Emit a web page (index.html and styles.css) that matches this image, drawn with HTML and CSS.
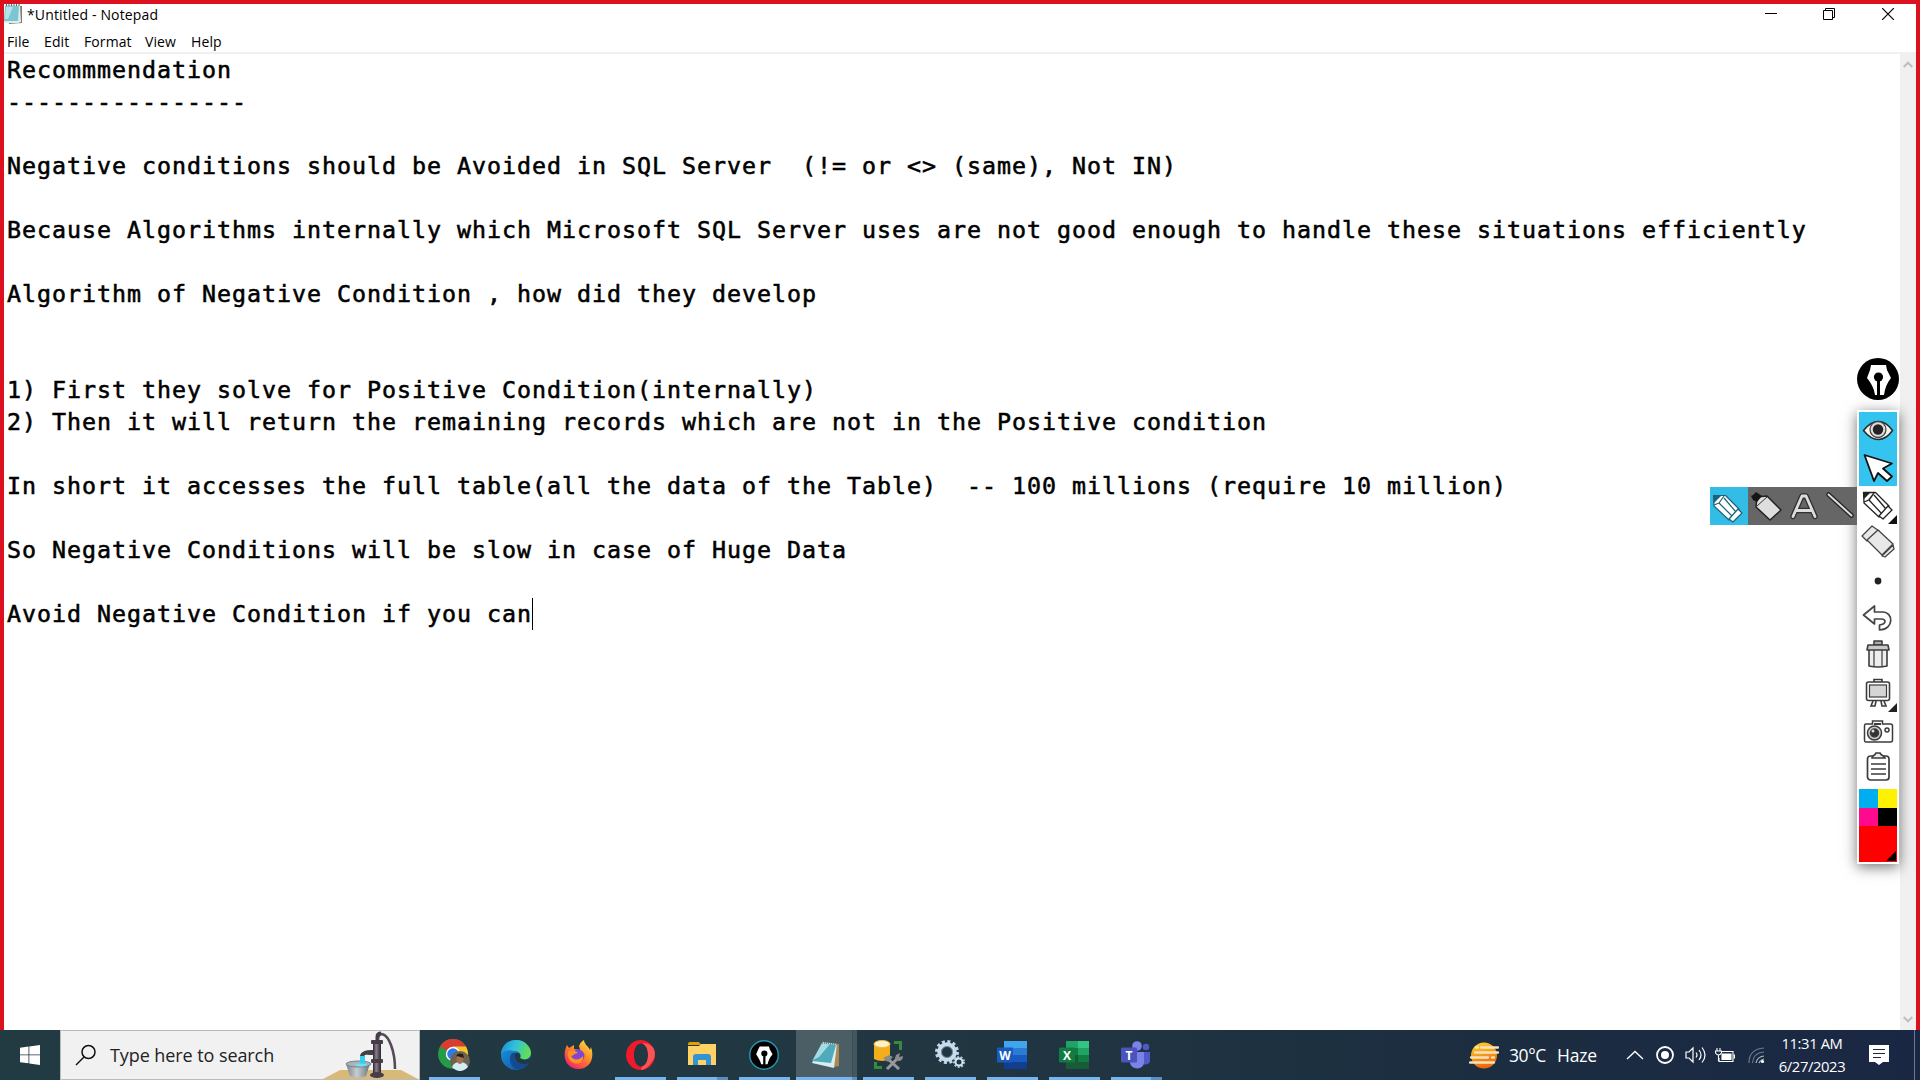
FILE: index.html
```html
<!DOCTYPE html>
<html lang="en">
<head>
<meta charset="utf-8">
<title>*Untitled - Notepad</title>
<link rel="stylesheet" href="styles.css">
</head>
<body>
<main class="window">
  <header class="titlebar">
    <svg class="app-icon" width="19" height="20" viewBox="0 0 19 20"><path d="M3 2h15v17l-13 1z" fill="#8b7960"/><path d="M1 1h15l1 17-3 1H0z" fill="#d9eef0"/><path d="M1 2h14l-1 15H0z" fill="#7cc5d2"/><path d="M2 3h7L4 15H1z" fill="#b6e3e8"/><path d="M2 1h14" stroke="#59656a" stroke-width="2" stroke-dasharray="1 1.5"/></svg>
    <span class="title">*Untitled - Notepad</span>
    <div class="controls">
      <svg width="12" height="12" viewBox="0 0 12 12"><path d="M0 5.500h12" stroke="#000"/></svg>
      <svg width="12" height="12" viewBox="0 0 12 12" fill="none" stroke="#000"><path d="M.5 2.500h9v9h-9zM2.500 2.500V.5h9v9h-2"/></svg>
      <svg width="12" height="12" viewBox="0 0 12 12"><path d="M0 0l12 12M12 0L0 12" stroke="#000" stroke-width="1.200"/></svg>
    </div>
  </header>
  <nav class="menu"><span class="m-file">File</span><span class="m-edit">Edit</span><span class="m-format">Format</span><span class="m-view">View</span><span class="m-help">Help</span></nav>
  <section class="editor">
<pre class="text">Recommmendation
----------------

Negative conditions should be Avoided in SQL Server  (!= or &lt;&gt; (same), Not IN)

Because Algorithms internally which Microsoft SQL Server uses are not good enough to handle these situations efficiently

Algorithm of Negative Condition , how did they develop


1) First they solve for Positive Condition(internally)
2) Then it will return the remaining records which are not in the Positive condition

In short it accesses the full table(all the data of the Table)  -- 100 millions (require 10 million)

So Negative Conditions will be slow in case of Huge Data

Avoid Negative Condition if you can<span class="caret"></span></pre>
    <div class="scrollbar">
      <svg width="10" height="7" viewBox="0 0 10 7"><path d="M.7 6L5 1.700 9.300 6" fill="none" stroke="#bfbfbf" stroke-width="2"/></svg>
      <svg width="10" height="7" viewBox="0 0 10 7"><path d="M.7 1L5 5.300 9.300 1" fill="none" stroke="#bfbfbf" stroke-width="2"/></svg>
    </div>
  </section>
</main>

<svg class="pen-hub" width="42" height="42" viewBox="0 0 42 42"><circle cx="21" cy="21" r="21"/><path d="M14 7h15l1 5 4 8c-4 5-6 10-7 17h-4V23h-3v14h-2c-1-7-4-12-8-17l3-8z" fill="#fff"/><circle cx="21.500" cy="19" r="4.600"/><path d="M21.500 20v17" stroke="#000" stroke-width="1.600"/></svg>

<aside class="flyout">
  <svg class="picked" width="38" height="38" viewBox="0 0 38 38"><g stroke="#1b6378" stroke-width="1.200" stroke-linejoin="round"><path d="M3.500 8.500h12L29 22 19 33 4 19z" fill="#fff"/><path d="M4 18l5-2 5-7M9 16l14 14M14 11l12 14" fill="none"/><path d="M19 32l9-10 4 4-9 9z" fill="#fff"/></g><path d="M3 8h9l-8 8z" fill="#1b6378"/></svg>
  <svg width="37" height="38" viewBox="0 0 37 38"><path d="M9 10l10-1 14 14-11 10L8 20z" fill="#dedede" stroke="#222" stroke-width="1.500" stroke-linejoin="round"/><path d="M9 19l10-9" stroke="#333" fill="none"/><path d="M3 9l2-1 3-3 6 4-5 6-4-2z" fill="#151515"/></svg>
  <svg width="36" height="38" viewBox="0 0 36 38"><path d="M8 29.500L17 9h4l9 20.500M12.500 23.500h13" fill="none" stroke="#303030" stroke-width="5.500" stroke-linejoin="round" stroke-linecap="round"/><path d="M8 29.500L17 9h4l9 20.500M12.500 23.500h13" fill="none" stroke="#ddd" stroke-width="2.800" stroke-linejoin="round" stroke-linecap="round"/></svg>
  <svg width="36" height="38" viewBox="0 0 36 38"><path d="M7.500 7.500l23 21" stroke="#222" stroke-width="4.500" stroke-linecap="round"/><path d="M7.500 7.500l23 21" stroke="#ddd" stroke-width="2" stroke-linecap="round"/></svg>
</aside>

<aside class="tools">
  <svg class="on" width="38" height="37" viewBox="0 0 38 37"><path d="M4.500 18.500C14 6.500 25 6.500 33.500 18.500 25 30.500 14 30.500 4.500 18.500z" fill="#faf7ef" stroke="#2c2c2c" stroke-width="1.600"/><circle cx="19" cy="17.500" r="8" fill="#ddd" stroke="#444" stroke-width="1.300"/><circle cx="19" cy="17.500" r="5.200" fill="#222"/></svg>
  <svg class="on" width="38" height="37" viewBox="0 0 38 37"><path d="M5.500 6L33 14.500l-9 5 9 8-5 4.500-9-8-4 8z" fill="#fff" stroke="#111" stroke-width="1.800" stroke-linejoin="round"/></svg>
  <svg width="38" height="38" viewBox="0 0 38 38"><g stroke="#222" stroke-width="1.300" stroke-linejoin="round"><path d="M4.500 6.500h12L30 20l-10 11L5 17z" fill="#fff"/><path d="M5 16l5-2 5-7M10 14l13 14M15 9l12 14" fill="#ddd"/><path d="M20 30l9-10 4 4-9 9z" fill="#fff"/></g><path d="M4 6h8l-7 7z" fill="#222"/><path d="M38 29v9h-9z" fill="#111"/></svg>
  <svg width="38" height="35" viewBox="0 -1 38 35"><g fill="#e8e8e8" stroke="#444" stroke-width="1.300" stroke-linejoin="round"><path d="M3 11L13 1l7 5-12 10z"/><path d="M8 15L19 5l15 14-11 11z"/><path d="M23 31l11-11 1 4-9 8z"/></g></svg>
  <svg width="38" height="39" viewBox="0 -4 38 39"><circle cx="19" cy="18" r="3.400" fill="#222"/></svg>
  <svg width="38" height="35" viewBox="0 0 38 35"><path d="M4.500 17L15.500 8v6h8c11 0 12 17-3 18v-5c7-1 7-6 2-6h-7v5z" fill="#fff" stroke="#454545" stroke-width="1.700" stroke-linejoin="round"/></svg>
  <svg width="38" height="41" viewBox="0 0 38 41"><g stroke="#3c3c3c" stroke-width="1.600" stroke-linejoin="round"><path d="M15 8h8v4h-8z" fill="#aaa"/><path d="M10 16h18v17q-9 2-18 0z" fill="#eee"/><path d="M15 17v16M23 17v16" fill="none" stroke-width="1.200"/><path d="M9 12h20l1 5H8z" fill="#c8c8c8"/></g></svg>
  <svg width="38" height="38" viewBox="0 0 38 38"><g stroke="#3c3c3c" stroke-width="1.600" fill="#fff"><path d="M15 5.500h8v3h-8z"/><path d="M14 27l-2 5h4l1-5M22 27l1 5h4l-2-5"/><rect x="7.500" y="8" width="23" height="18.500" rx="2"/><rect x="10.500" y="11" width="17" height="12" fill="#d5d5d5" stroke-width="1.200"/></g><path d="M38 29v9h-9z" fill="#222"/></svg>
  <svg width="38" height="36" viewBox="0 0 38 36"><g stroke="#3c3c3c" stroke-width="1.500" fill="#fff"><path d="M6.500 12h7V9h10v3h8q2 0 2 2v14q0 2-2 2h-25q-1 0-1-2V14q0-2 1-2z"/><path d="M15 12h7" stroke-width="2"/><circle cx="15.500" cy="21" r="7" fill="#ccc"/><circle cx="15.500" cy="21" r="4" fill="#333"/><circle cx="28" cy="18" r="2" fill="#eee"/></g><circle cx="14" cy="19" r="1.500" fill="#ddd"/></svg>
  <svg width="38" height="36" viewBox="0 0 38 36"><g fill="#fff" stroke="#3c3c3c" stroke-width="1.700"><rect x="8.500" y="8" width="21.500" height="24" rx="3"/><path d="M13 10c0-3 3-2 4-5h4c1 3 4 2 5 5z" fill="#eee"/><path d="M12 16h15M12 21h15M12 26h15" stroke-width="1.300"/></g></svg>
  <div class="palette"><i class="cyan"></i><i class="yellow"></i><i class="pink"></i><i class="black"></i><i class="red"><svg width="10" height="10" viewBox="0 0 10 10"><path d="M10 0v10H0z"/></svg></i></div>
</aside>

<footer class="taskbar">
  <div class="start"><svg width="20" height="20" viewBox="0 0 20 20" fill="#fff"><path d="M0 2.800L8.500 1.600V9.500H0zM9.300 1.500L20 0v9.500H9.300zM0 10.300h8.500v8L0 17.200zM9.300 10.300H20V20L9.300 18.500z"/></svg></div>
  <div class="search">
    <svg width="22" height="22" viewBox="0 0 22 22" fill="none" stroke="#111" stroke-width="1.500"><circle cx="13.500" cy="8" r="6.500"/><path d="M9 13l-8 8"/></svg>
    <span>Type here to search</span>
    <svg class="pump" width="96" height="48" viewBox="0 0 96 48">
      <defs><linearGradient id="metal"><stop stop-color="#2b252d"/><stop offset=".4" stop-color="#8a7e8c"/><stop offset="1" stop-color="#2b252d"/></linearGradient><linearGradient id="bowl"><stop stop-color="#77838a"/><stop offset=".45" stop-color="#c5ced2"/><stop offset="1" stop-color="#69757b"/></linearGradient></defs>
      <path d="M0 48L17 39h61l17 9z" fill="#d9b978"/>
      <path d="M55 9c0-9 8-8 13 5 3 8 4 15 4 24" fill="none" stroke="#544b57" stroke-width="2.600"/>
      <path d="M54 13V6q0-4 4-4" fill="none" stroke="#443c47" stroke-width="3"/><rect x="50" y="10" width="8" height="33" fill="url(#metal)"/><rect x="48" y="9" width="12" height="4" rx="1" fill="#453c48"/><rect x="48" y="28" width="12" height="4" rx="1" fill="#453c48"/>
      <path d="M50 19c-7 0-12 1-13 6h4c1-2 5-1 9-1z" fill="#453d48"/><ellipse cx="54" cy="44" rx="7" ry="3" fill="#463d48"/>
      <path d="M23 33l4 12q9 3 16 0l4-12z" fill="url(#bowl)"/><ellipse cx="35.500" cy="33" rx="12.500" ry="3" fill="#a9b4b8" stroke="#748086"/><path d="M37 25h5v9h-5z" fill="#35cef2"/><ellipse cx="38" cy="34" rx="6" ry="1.400" fill="#6fe0f5"/>
    </svg>
  </div>
  <div class="apps">
    <div class="app run"><svg width="32" height="32" viewBox="0 0 32 32"><circle cx="15" cy="15" r="15" fill="#249b48"/><path d="M15 15L2 7.500A15 15 0 0 1 28 7.500z" fill="#db3c30"/><path d="M15 7.500h13A15 15 0 0 1 15 30l7-12z" fill="#fbc22c"/><circle cx="15" cy="15" r="7.200" fill="#fff"/><circle cx="15" cy="15" r="5.800" fill="#3279e8"/><circle cx="22" cy="22" r="10" fill="#6c6450"/><path d="M14 28q2-5 8-5t8 5q-8 8-16 0z" fill="#d3edf2"/><ellipse cx="22" cy="20" rx="3.500" ry="5" fill="#a56e50"/><path d="M18 18q1-5 7-3l1 4-7-2z" fill="#211d1c"/></svg></div>
    <div class="app"><svg width="30" height="30" viewBox="0 0 30 30"><defs><linearGradient id="edgeA" x2="1" y2=".3"><stop stop-color="#1686d4"/><stop offset=".5" stop-color="#31c0df"/><stop offset="1" stop-color="#62dc59"/></linearGradient><linearGradient id="edgeB" x2="1" y2="1"><stop stop-color="#1b9be4"/><stop offset="1" stop-color="#114a99"/></linearGradient></defs><circle cx="15" cy="15" r="15" fill="url(#edgeB)"/><path d="M0 14C1 4 8 0 15 0c10 0 15 8 15 13 0 6-7 8-11 5 2-4-1-7-6-7C7 9 2 11 0 14z" fill="url(#edgeA)"/><path d="M11 13c-4 5-2 13 4 16 6 1 11-3 13-7-4 3-13 2-14-3-1-2 0-4 1-6z" fill="#154a91"/><path d="M15 13c4-1 5 3 4 5 4 3 9 2 11-1v5l-2 1c-5 2-13 1-14-5q-1-4 1-5z" fill="#213742"/></svg></div>
    <div class="app"><svg width="30" height="30" viewBox="0 0 30 30"><defs><linearGradient id="fox" x1="1" x2=".3" y2="1"><stop stop-color="#fff04c"/><stop offset=".5" stop-color="#ff8c25"/><stop offset="1" stop-color="#f5246a"/></linearGradient></defs><path d="M4 5l2 3 5-3v4l6 1-1-4c1-3 3-5 5-6 0 4 5 7 6 10l1-3c4 11-1 22-13 22C4 29-2 17 4 5z" fill="url(#fox)"/><circle cx="15" cy="16" r="6.500" fill="#8145d6"/><path d="M5 12c4-3 8-1 10 1-4 0-4 3-7 3 2 5 9 4 12 0 1 6-5 9-9 7-5-2-7-6-6-11z" fill="#ff931e"/></svg></div>
    <div class="app run"><svg width="29" height="30" viewBox="0 0 29 30"><path fill-rule="evenodd" d="M14.500 0a14.500 15 0 1 0 .1 0zM15 3.500c4 0 7 5 7 11.500s-3 11.500-7 11.500S8 22 8 15s3-11.500 7-11.500z" fill="#f01a2b"/><path d="M16 26.500c3 1 7-1 10-5-3 5-7 8-11 8.500zM16 3.500c4-1 7 0 11 4 3 5 2 11-1 14-3 4-7 6-10 5 4-1 6-6 6-11.500S20 4.500 16 3.500z" fill="#fa5554"/></svg></div>
    <div class="app run stack"><svg width="28" height="26" viewBox="0 0 28 26"><path d="M0 2q0-2 2-2h9l2 3H0z" fill="#dfa000"/><path d="M0 4h11l2-2h15v21H0z" fill="#ffd265"/><path d="M5 23V15q0-3 3-3h12q3 0 3 3v8h-5v-5h-8v5z" fill="#3293d5"/><path d="M10 18h8v5h-8z" fill="#ffd265"/></svg></div>
    <div class="app run"><svg width="30" height="30" viewBox="0 0 42 42"><circle cx="21" cy="21" r="20" stroke="#2795b5" stroke-width="2"/><path d="M15 9h13l1 4 4 7c-4 5-6 9-7 14h-3V23h-3v11h-3c-1-5-4-9-7-14l3-7z" fill="#fff"/><circle cx="21.500" cy="19" r="4.300"/><path d="M21.500 20v14" stroke="#000" stroke-width="2"/></svg></div>
    <div class="app active"><svg width="28" height="28" viewBox="0 0 28 28"><path d="M11 2l16 1v22l-5 1z" fill="#ad8851"/><path d="M11 1l14 2-3 24L0 22z" fill="#d9edf0"/><path d="M10 2l14 2-5 18L0 20z" fill="#4faabb"/><path d="M10 2l8 1L7 16l-6 3z" fill="#a7dbe1"/><path d="M10 1.500l16 2" stroke="#687b81" stroke-width="2" stroke-dasharray="1 1"/></svg></div>
    <div class="app run"><svg width="30" height="30" viewBox="0 0 30 30"><path d="M1 4v15q8 4 16 0V4z" fill="#f3ae1b"/><ellipse cx="9" cy="4" rx="8" ry="3.500" fill="#fff1d0" stroke="#f5b932"/><path d="M21 1h8v9h-3V4h-5zM1 22v7h8v-3H4v-4z" fill="#368c3d"/><path d="M14 18l12 11M25 18L14 29" stroke="#999" stroke-width="3"/><path d="M10 18l6-3 4 2-5 5zM22 18l1-3 4-2-1 4 4-1c0 5-4 6-7 4z" fill="#8b8b8b"/></svg></div>
    <div class="app run"><svg width="30" height="30" viewBox="0 0 30 30" fill="none"><circle cx="12" cy="12" r="10.500" stroke="#bfd7ea" stroke-width="3" stroke-dasharray="3 2.500"/><circle cx="12" cy="12" r="7.800" stroke="#c9dced" stroke-width="4"/><circle cx="12" cy="12" r="5.500" stroke="#7390a7"/><circle cx="24" cy="22" r="5" stroke="#a8c8df" stroke-width="2" stroke-dasharray="2 1.500"/><circle cx="24" cy="22" r="3.500" stroke="#d5e4f0" stroke-width="2"/></svg></div>
    <div class="app run"><svg width="30" height="28" viewBox="0 0 30 28"><path d="M7 0h23v7H7z" fill="#41a5ee"/><path d="M7 7h23v7H7z" fill="#2b7cd3"/><path d="M7 14h23v7H7z" fill="#185abd"/><path d="M7 21h23v7H7z" fill="#103f91"/><rect y="6.500" width="16" height="15" rx="1" fill="#185abd"/><text x="8" y="18.500" class="glyph">W</text></svg></div>
    <div class="app run"><svg width="30" height="28" viewBox="0 0 30 28"><path d="M7 0h12v21H7z" fill="#21a366"/><path d="M19 0h11v7H19z" fill="#33c481"/><path d="M7 7h12v7H7z" fill="#107c41"/><path d="M19 7h11v7H19z" fill="#21a366"/><path d="M7 14h23v14H7z" fill="#185c37"/><path d="M19 14h11v7H19z" fill="#107c41"/><rect y="6.500" width="16" height="15" rx="1" fill="#107c41"/><text x="8" y="18.500" class="glyph">X</text></svg></div>
    <div class="app run stack"><svg width="30" height="28" viewBox="0 0 30 28"><circle cx="25" cy="6" r="3.200" fill="#5059c9"/><path d="M18 11h11v9c0 4-7 5-10 1z" fill="#5059c9"/><circle cx="16" cy="5" r="4.800" fill="#7b83eb"/><path d="M9 11h14v10c0 9-14 8-14 0z" fill="#7b83eb"/><rect y="6.500" width="16" height="15" rx="1" fill="#4b53bc"/><text x="8" y="18.500" class="glyph">T</text></svg></div>
  </div>
  <div class="tray">
    <svg class="haze" width="30" height="27" viewBox="0 0 30 27"><defs><linearGradient id="sun" x2=".3" y2="1"><stop stop-color="#ffd52c"/><stop offset="1" stop-color="#ed690c"/></linearGradient></defs><circle cx="15" cy="13.500" r="13" fill="url(#sun)"/><g stroke="#f6e2bd" stroke-width="2.300" stroke-linecap="round"><path d="M12 5.500h17M7 5.500h2M6 10.500h23M2 15.500h17M23 15.500h2M1 20.500h24"/></g></svg>
    <span class="weather">30°C</span><span class="condition">Haze</span>
    <svg class="chevron" width="18" height="10" viewBox="0 0 18 10"><path d="M1 9l8-7.500L17 9" fill="none" stroke="#fff" stroke-width="1.400"/></svg>
    <svg class="record" width="18" height="18" viewBox="0 0 18 18"><circle cx="9" cy="9" r="8" fill="none" stroke="#fff" stroke-width="1.800"/><circle cx="9" cy="9" r="4" fill="#fff"/></svg>
    <svg class="speaker" width="21" height="18" viewBox="0 0 21 18" fill="none" stroke="#fff" stroke-width="1.200"><path d="M1 6h3l4-4v14l-4-4H1z"/><path d="M11 6.500q2 2.500 0 5M14 4q4 5 0 10M17 1.500q6 7.500 0 15"/></svg>
    <svg class="battery" width="20" height="15" viewBox="0 0 20 15" fill="none" stroke="#fff" stroke-width="1.100"><path d="M6 3.500h12v10H4V10"/><path d="M7 6h9v5.500H7z" fill="#fff"/><path d="M18.500 7h1v3h-1M2 0v3M5 0v3M.5 3h6v2q-3 4-6 0zM3.500 6.500V13"/></svg>
    <svg class="wifi" width="17" height="17" viewBox="0 0 17 17" fill="none" stroke-width="1.200"><path d="M1 16Q1 2 16 1M4.500 16Q5 6 16 5" stroke="#6d788b"/><path d="M8 16q1-6 8-7M11 16q1-3 5-4" stroke="#aeb5c0"/><circle cx="14.500" cy="14.500" r="1.600" fill="#fff"/></svg>
    <div class="clock"><span>11:31 AM</span><span>6/27/2023</span></div>
    <svg class="notice" width="20" height="20" viewBox="0 0 20 20"><path d="M0 0h20v17h-6l-4 3-4-3H0z" fill="#fff"/><path d="M4 4.500h12M4 8.500h12M4 12.500h8" stroke="#1b2943" stroke-width="1.200"/></svg>
    <i class="desktop-edge"></i>
  </div>
</footer>
</body>
</html>
```

FILE: styles.css
```css
* { box-sizing: border-box; }
body { margin: 0; width: 1920px; height: 1080px; overflow: hidden; display: flex; flex-direction: column; background: #fff; font-family: "Open Sans", sans-serif; }
svg { display: block; flex: none; }
.window { height: 1030px; display: flex; flex-direction: column; border: 4px solid #dc1120; border-bottom: 0; color: #000; }
.titlebar { height: 22px; display: flex; align-items: flex-start; }
.title { margin-left: 4px; font-size: 14px; line-height: 21px; letter-spacing: .14px; white-space: nowrap; }
.controls { display: flex; gap: 47px; margin: 4px 22px 0 auto; }
.controls svg:first-child { margin-right: -1px; }
.menu { height: 28px; border-bottom: 2px solid #f0f0f0; display: flex; padding-left: 3px; font-size: 14px; line-height: 31px; letter-spacing: .1px; white-space: nowrap; }
.menu span { flex: none; }
.m-file { width: 37px; }
.m-edit { width: 40px; }
.m-format { width: 61px; }
.m-view { width: 46px; }
.editor { flex: 1; min-height: 0; display: flex; justify-content: space-between; }
.text { margin: 0; padding: 0 0 0 3px; font: 23.3px/32px "DejaVu Sans Mono", monospace; letter-spacing: .973px; white-space: pre; -webkit-text-stroke: .55px #000; }
.caret { display: inline-block; width: 1px; height: 32px; vertical-align: top; background: #000; }
.scrollbar { width: 16px; background: #f0f0f0; display: flex; flex-direction: column; justify-content: space-between; align-items: center; padding: 7px 0; }

.pen-hub { position: absolute; left: 1857px; top: 358px; }
.flyout { position: absolute; z-index: 1; left: 1710px; top: 487px; width: 147px; height: 38px; display: flex; background: #666; }
.picked { background: #33bde6; }
.tools { position: absolute; left: 1857px; top: 410px; width: 42px; height: 454px; padding: 2px; background: #fff; box-shadow: 0 3px 13px rgba(0,0,0,.55); }
.on { background: #35c3ef; }
.palette { display: grid; grid-template: 19px 18px 36px / 19px 19px; margin-top: 5px; }
.cyan { background: #00adef; }
.yellow { background: #fff200; }
.pink { background: #ff0a8d; }
.black { background: #000; }
.red { grid-column: span 2; background: #f00; display: flex; align-items: flex-end; justify-content: flex-end; padding: 1px; }

.taskbar { height: 50px; display: flex; background: linear-gradient(90deg, #223b43, #213641 50%, #1c2e40 75%, #1a2744); color: #fff; }
.start { width: 60px; display: flex; align-items: center; justify-content: center; }
.search { width: 360px; border: 1px solid #b9bbbd; background: #f1f1f1; color: #222; display: flex; align-items: center; padding-left: 14px; font-size: 18px; }
.search span { margin-left: 13px; width: 213px; letter-spacing: -.08px; white-space: nowrap; }
.apps { display: flex; margin-left: 3px; }
.app { width: 62px; height: 50px; display: flex; flex-direction: column; align-items: center; justify-content: center; position: relative; }
.run::after, .active::after { content: ""; position: absolute; left: 6px; bottom: 0; width: 51px; height: 3px; background: #76b5ed; }
.stack::after { background: linear-gradient(90deg, #76b5ed 40px, #5b8ebd 40px); }
.active { background: linear-gradient(90deg, #4b5d65 56px, #344850 56px, #44565e 57px) no-repeat 1px 0 / 61px 50px; }
.active::after { left: 1px; width: 61px; background: linear-gradient(90deg, #76b5ed 56px, #5b8ebd 56px); }
.glyph { fill: #fff; font: bold 12px "Open Sans", sans-serif; text-anchor: middle; }
.tray { flex: 1; display: flex; align-items: center; font-size: 17.5px; white-space: nowrap; }
.haze { margin-left: 302px; }
.weather { width: 48px; margin-left: 10px; letter-spacing: -.4px; }
.condition { width: 41px; letter-spacing: -.2px; }
.chevron { margin-left: 28px; }
.record { margin-left: 12px; }
.speaker { margin-left: 11px; }
.battery { margin-left: 9px; }
.wifi { margin-left: 13px; }
.clock { width: 70px; margin-left: 12px; display: flex; flex-direction: column; align-items: center; font-size: 14.8px; line-height: 23px; letter-spacing: -.4px; }
.notice { margin-left: 22px; }
.desktop-edge { width: 1px; height: 50px; margin-left: 25px; background: #6f7787; }
```
